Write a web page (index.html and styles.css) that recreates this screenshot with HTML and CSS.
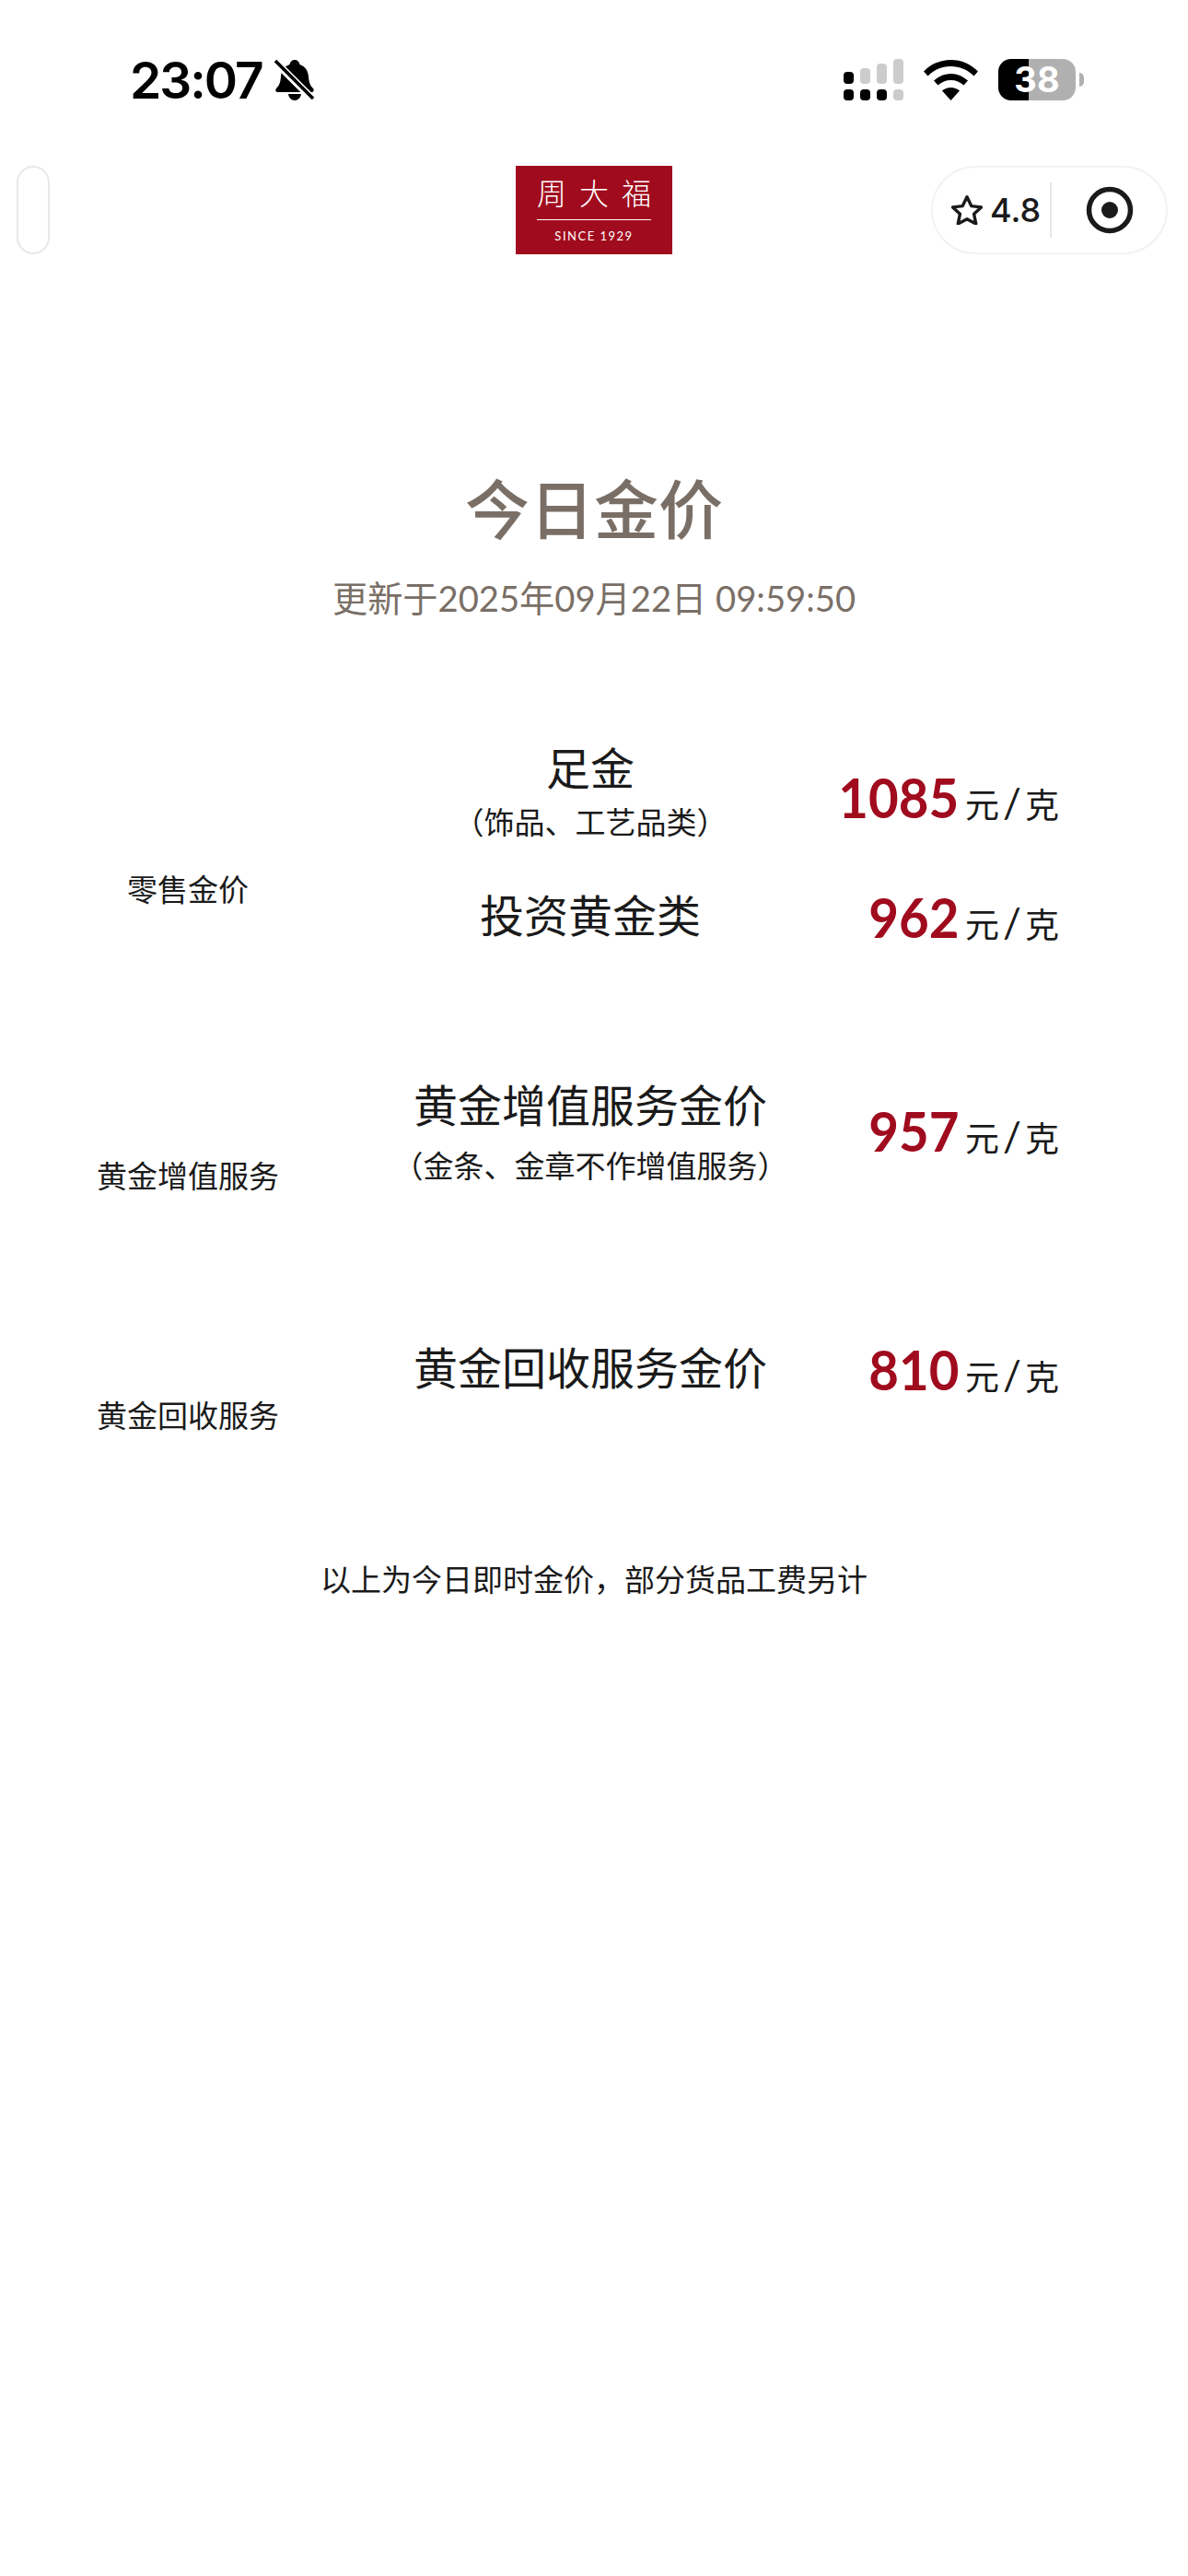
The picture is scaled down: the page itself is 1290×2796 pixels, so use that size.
FILE: index.html
```html
<!DOCTYPE html>
<html>
<head>
    <title>今日金价</title>
    <meta charset="UTF-8">
    <link rel="stylesheet" href="styles.css">
</head>
<body>
    <div class="status-bar">
        <div class="status-left">
            <span class="time">23:07</span>
            <svg class="bell" width="44" height="46" viewBox="0 0 44 46">
                <path d="M22 1c3 0 5 2 5.500 5 6 2 9 7 9.500 13 .5 7 2 10 5 13 1.500 2 .5 4-2 4H4c-2.500 0-3.500-2-2-4 3-3 4.500-6 5-13 .5-6 3.500-11 9.500-13C17 3 19 1 22 1zM15 38h14c-.5 4-3.500 7-7 7s-6.500-3-7-7z" fill="#000"/>
                <path d="M1 3l41 41" stroke="#fff" stroke-width="8"/>
                <path d="M1 2l41 41" stroke="#000" stroke-width="3.500"/>
            </svg>
        </div>
        <div class="status-right">
            <svg width="65" height="45" viewBox="0 0 65 45">
                <rect x="0" y="14" width="11" height="13" rx="4" fill="#000"/>
                <rect x="18" y="10" width="11" height="17" rx="4" fill="#ccc"/>
                <rect x="36" y="5" width="11" height="22" rx="4" fill="#ccc"/>
                <rect x="54" y="0" width="11" height="27" rx="4" fill="#ccc"/>
                <rect x="0" y="33" width="11" height="12" rx="4" fill="#000"/>
                <rect x="18" y="33" width="11" height="12" rx="4" fill="#000"/>
                <rect x="36" y="33" width="11" height="12" rx="4" fill="#000"/>
                <rect x="54" y="33" width="11" height="12" rx="4" fill="#ccc"/>
            </svg>
            <svg class="wifi" width="59" height="44" viewBox="0 0 59 44">
                <path d="M29.500 0C41 0 51 4.500 59 12.500l-4.500 5C47.500 10.500 39 7 29.500 7S11.500 10.500 4.500 17.500L0 12.500C8 4.500 18 0 29.500 0z" fill="#000"/>
                <path d="M29.500 15c7 0 13.500 3 18.500 7.500l-4.500 5c-4-3.500-8.500-5.500-14-5.500s-10 2-14 5.500l-4.500-5C16 18 22.500 15 29.500 15z" fill="#000"/>
                <path d="M29.500 30c3.500 0 7 1.500 9.500 3.500L29.500 44 20 33.500c2.500-2 6-3.500 9.500-3.500z" fill="#000"/>
            </svg>
            <div class="battery"><span>38</span></div>
            <div class="battery-tip"></div>
        </div>
    </div>

    <div class="nav-bar">
        <div class="back-pill"></div>
        <div class="logo">
            <div class="logo-name"><span>周</span><span>大</span><span>福</span></div>
            <div class="logo-since">SINCE 1929</div>
        </div>
        <div class="capsule">
            <svg width="34" height="32" viewBox="3 2 28 27">
                <path d="M17 3.500l4 8.300 9 1.100-6.600 6.200 1.800 9L17 23.700l-8.200 4.400 1.800-9L4 12.900l9-1.100z" fill="none" stroke="#1a1a1a" stroke-width="2.900" stroke-linejoin="round"/>
            </svg>
            <span class="rating">4.8</span>
            <div class="capsule-line"></div>
            <svg class="target" width="52" height="52" viewBox="0 0 52 52">
                <circle cx="26" cy="26" r="22.500" fill="none" stroke="#1a1a1a" stroke-width="5.500"/>
                <circle cx="26" cy="26" r="9" fill="#1a1a1a"/>
            </svg>
        </div>
    </div>

    <div class="heading">
        <h1>今日金价</h1>
        <p>更新于2025年09月22日 09:59:50</p>
    </div>

    <div class="price-group group-retail">
        <div class="group-label">零售金价</div>
        <div class="group-rows">
            <div class="price-row row-fine">
                <div class="item-name">足金<small>（饰品、工艺品类）</small></div>
                <div class="item-price"><b>1085</b><span>元<i>/</i>克</span></div>
            </div>
            <div class="price-row row-invest">
                <div class="item-name">投资黄金类</div>
                <div class="item-price"><b>962</b><span>元<i>/</i>克</span></div>
            </div>
        </div>
    </div>

    <div class="price-group group-service">
        <div class="group-label">黄金增值服务</div>
        <div class="group-rows">
            <div class="price-row">
                <div class="item-name">黄金增值服务金价<small>（金条、金章不作增值服务）</small></div>
                <div class="item-price"><b>957</b><span>元<i>/</i>克</span></div>
            </div>
        </div>
    </div>

    <div class="price-group group-recycle">
        <div class="group-label">黄金回收服务</div>
        <div class="group-rows">
            <div class="price-row">
                <div class="item-name">黄金回收服务金价</div>
                <div class="item-price"><b>810</b><span>元<i>/</i>克</span></div>
            </div>
        </div>
    </div>

    <p class="note">以上为今日即时金价，部分货品工费另计</p>
</body>
</html>
```

FILE: styles.css
```css
* {
    box-sizing: border-box;
}
body {
    margin: 0;
    width: 1290px;
    height: 2796px;
    overflow: hidden;
    background: #fff;
    font-family: Lato, "Noto Sans CJK SC", sans-serif;
    color: #1a1a1a;
}
.status-bar {
    height: 180px;
    padding: 64px 0 0 141px;
    display: flex;
    justify-content: space-between;
    align-items: flex-start;
}
.status-left {
    display: flex;
    align-items: center;
    gap: 13px;
}
.time {
    font-family: Inter, sans-serif;
    font-size: 55px;
    letter-spacing: -2px;
    line-height: 46px;
    font-weight: 600;
    color: #000;
}
.status-right {
    display: flex;
    align-items: flex-start;
    padding-right: 113px;
}
.wifi {
    margin: 1px 22px 0 22px;
}
.battery {
    width: 84px;
    height: 45px;
    border-radius: 14px;
    background: linear-gradient(90deg, #000 33px, #b0b0b0 33px);
    color: #fff;
    font-family: Inter, sans-serif;
    font-size: 38px;
    font-weight: 700;
    line-height: 45px;
    text-align: center;
}
.battery-tip {
    width: 5px;
    height: 15px;
    margin: 15px 0 0 4px;
    border-radius: 0 8px 8px 0;
    background: #b0b0b0;
}
.nav-bar {
    height: 96px;
    padding: 0 22px 0 18px;
    display: grid;
    grid-template-columns: 542px 170px 1fr;
}
.back-pill {
    width: 36px;
    border: 2px solid #e8e8e8;
    border-radius: 18px;
}
.logo {
    background: #a00b1e;
    color: #fff;
    display: flex;
    flex-direction: column;
    align-items: center;
}
.logo-name {
    width: 124px;
    padding-top: 9px;
    height: 59px;
    border-bottom: 1px solid #fff;
    display: flex;
    justify-content: space-between;
    font-family: "Noto Sans CJK SC", sans-serif;
    font-weight: 300;
    font-size: 32px;
    line-height: 38px;
}
.logo-since {
    margin-top: 9px;
    font-size: 13px;
    letter-spacing: 1.500px;
    line-height: 16px;
}
.capsule {
    width: 257px;
    justify-self: end;
    border: 2px solid #f2f2f2;
    border-radius: 48px;
    display: flex;
    align-items: center;
    padding-left: 20px;
}
.rating {
    margin-left: 8px;
    font-family: Inter, sans-serif;
    font-size: 36px;
    font-weight: 500;
}
.capsule-line {
    width: 2px;
    height: 60px;
    margin-left: 10px;
    background: #e6e6e6;
}
.target {
    margin-left: 37px;
}
.heading {
    margin-top: 229px;
    text-align: center;
    color: #7a6f66;
}
.heading h1 {
    margin: 0;
    font-size: 70px;
    font-weight: 500;
    line-height: 96px;
}
.heading p {
    margin: 20px 0 0;
    font-size: 38.200px;
    line-height: 56px;
}
.price-group {
    display: grid;
    grid-template-columns: 408px 742px;
}
.group-retail {
    margin-top: 125px;
}
.group-service {
    margin-top: 138px;
}
.group-recycle {
    margin-top: 150px;
}
.group-label {
    font-size: 33px;
    line-height: 46px;
    text-align: center;
    align-self: end;
}
.group-retail .group-label {
    margin-bottom: 42px;
}
.group-service .group-rows {
    padding-bottom: 11px;
}
.group-recycle .group-rows {
    padding-bottom: 38px;
}
.price-row {
    display: grid;
    grid-template-columns: 466px 276px;
    align-items: center;
}
.row-invest {
    margin-top: 43px;
}
.item-name {
    font-size: 48px;
    line-height: 64px;
    text-align: center;
}
.item-name small {
    display: block;
    margin-top: 3px;
    font-size: 33px;
    line-height: 46px;
}
.group-service .item-name small {
    margin-top: 10px;
}
.item-price {
    display: flex;
    justify-content: flex-end;
    align-items: baseline;
    gap: 7px;
}
.row-fine .item-price {
    padding-top: 12px;
}
.row-invest .item-price, .group-recycle .item-price {
    padding-top: 2px;
}
.group-service .item-price {
    padding-bottom: 2px;
}
.item-price b {
    font-size: 60px;
    font-weight: 700;
    line-height: 70px;
    color: #a00b1e;
    transform: scaleX(0.94);
    transform-origin: right bottom;
}
.item-price span {
    font-size: 37px;
    white-space: pre;
}
.item-price i {
    margin: 0 4px;
    font-size: 44px;
    font-style: normal;
}
.note {
    margin: 132px 0 0;
    font-size: 33px;
    line-height: 46px;
    text-align: center;
}
```
